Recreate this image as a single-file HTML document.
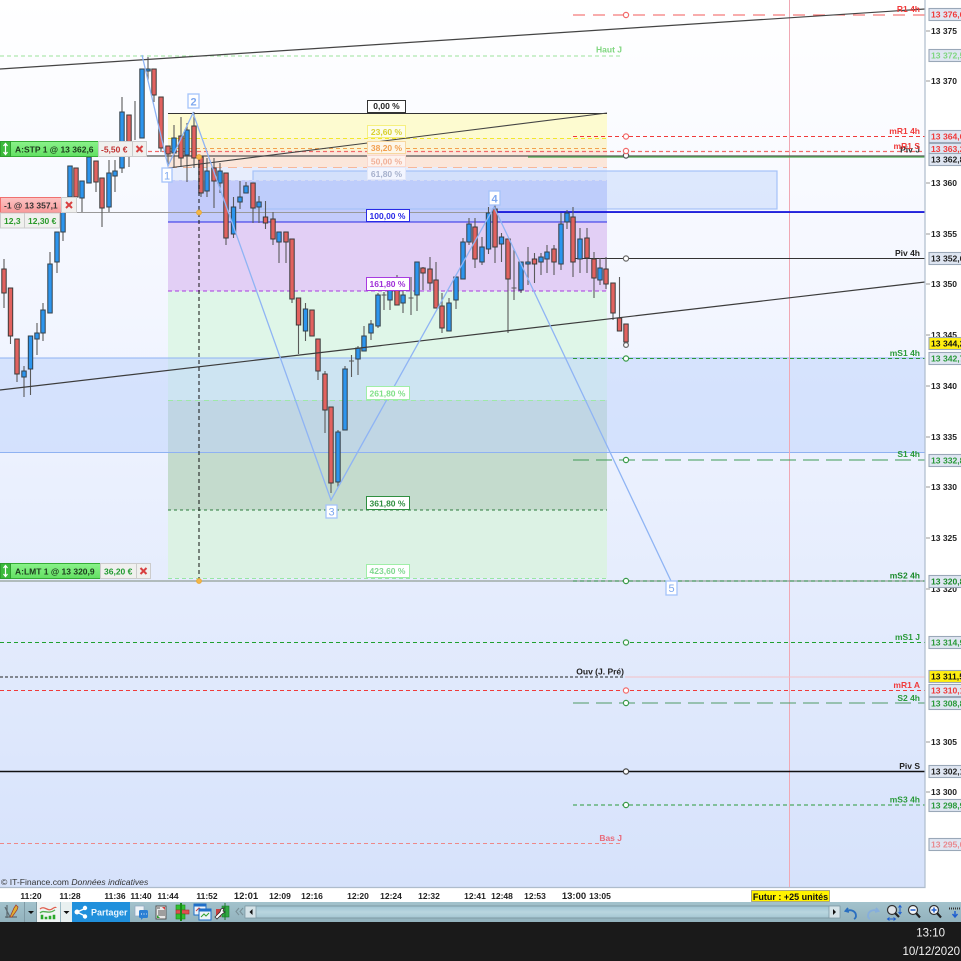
<!DOCTYPE html>
<html><head><meta charset="utf-8"><title>Chart</title>
<style>
html,body{margin:0;padding:0;background:#fff}
body{width:961px;height:961px;overflow:hidden}
svg{display:block;filter:blur(.35px)}
text{font-family:"Liberation Sans",sans-serif;font-size:8.5px;font-weight:bold}
.r{text-anchor:end}
.t{fill:#222}
.p{font-size:8.6px}
.ax{fill:#222}
.fl{text-anchor:middle}
</style></head><body>
<svg width="961" height="961" viewBox="0 0 961 961" xmlns="http://www.w3.org/2000/svg">
<defs>
<linearGradient id="bg" x1="0" y1="0" x2="0" y2="1"><stop offset="0" stop-color="#fff"/><stop offset=".35" stop-color="#f3f6ff"/><stop offset="1" stop-color="#d6e2fb"/></linearGradient>
<linearGradient id="tb" x1="0" y1="0" x2="0" y2="1"><stop offset="0" stop-color="#a3c2cc"/><stop offset="1" stop-color="#93b3be"/></linearGradient>
<linearGradient id="sc" x1="0" y1="0" x2="0" y2="1"><stop offset="0" stop-color="#9fc4d2"/><stop offset=".5" stop-color="#b9d6df"/><stop offset="1" stop-color="#a4c6d2"/></linearGradient>
<linearGradient id="gr" x1="0" y1="0" x2="0" y2="1"><stop offset="0" stop-color="#8af28a"/><stop offset="1" stop-color="#62e062"/></linearGradient>
<linearGradient id="pk" x1="0" y1="0" x2="0" y2="1"><stop offset="0" stop-color="#fcc4c4"/><stop offset="1" stop-color="#f89a9a"/></linearGradient>
</defs>
<rect width="961" height="961" fill="#fff"/>
<rect x="0" y="0" width="925" height="887" fill="url(#bg)"/>

<!-- fib zones -->
<rect x="168" y="113" width="439" height="25" fill="#fdfbd0"/>
<rect x="168" y="138" width="439" height="13" fill="#fbf4d2"/>
<rect x="168" y="151" width="439" height="16" fill="#fbe6da"/>
<rect x="168" y="167" width="439" height="13" fill="#e7edfc"/>
<rect x="168" y="180" width="439" height="42" fill="#c3cbfb"/>
<rect x="168" y="222" width="439" height="69" fill="#e2cff5"/>
<rect x="168" y="291" width="439" height="109" fill="#dff6e8"/>
<rect x="168" y="400" width="439" height="110" fill="#c4dbcd"/>
<rect x="168" y="510" width="439" height="68" fill="#dcf2e4"/>
<!-- blue band -->
<rect x="0" y="358" width="925" height="94" fill="#bcd2fb" fill-opacity=".5"/>
<path d="M0 358H925M0 452.500H925" stroke="#8fb2f2" stroke-width="1"/>
<!-- blue rect -->
<rect x="253" y="171" width="524" height="38" fill="#b8d0fb" fill-opacity=".42" stroke="#a5c2f8" stroke-width="1.2"/>
<path d="M789.500 0V887" stroke="#f0a8b4" stroke-width="1"/>

<!-- horizontal lines below candles -->
<path d="M77 212.500H925" stroke="#999" stroke-width="1"/>
<path d="M168 113.500H607" stroke="#333" stroke-width="1"/>
<path d="M168 138.500H607" stroke="#f2e72a" stroke-width="1" stroke-dasharray="4 3"/>
<path d="M168 148.500H607" stroke="#f1a24e" stroke-width="1" stroke-dasharray="4 3"/>
<path d="M168 167.500H607" stroke="#f6b79b" stroke-width="1" stroke-dasharray="9 6"/>
<path d="M168 180.500H607" stroke="#d5dcf5" stroke-width="1" stroke-dasharray="4 3"/>
<path d="M168 222H607" stroke="#2a2ae6" stroke-width="1"/>
<path d="M168 291H607" stroke="#a83be0" stroke-width="1" stroke-dasharray="4 3"/>
<path d="M168 400.500H607" stroke="#9ee8a8" stroke-width="1" stroke-dasharray="5 4"/>
<path d="M168 510H607" stroke="#2a7a3a" stroke-width="1" stroke-dasharray="3 3"/>
<path d="M168 578.500H607" stroke="#98e6a4" stroke-width="1" stroke-dasharray="4 3"/>
<path d="M0 56H623" stroke="#9be29b" stroke-width="1" stroke-dasharray="4 3"/>
<path d="M573 15H925" stroke="#f25a5a" stroke-width="1" stroke-dasharray="12 8"/>
<path d="M573 136.500H925" stroke="#f03a3a" stroke-width="1" stroke-dasharray="4 3"/>
<path d="M148 151.500H925" stroke="#f26a6a" stroke-width="1.200" stroke-dasharray="4 3"/>
<path d="M147 156H925" stroke="#555" stroke-width="1.300"/>
<path d="M528 157H925" stroke="#50a850" stroke-width="1.200"/>
<path d="M573 258.500H925" stroke="#333" stroke-width="1"/>
<path d="M573 358.500H925" stroke="#2a9a3a" stroke-width="1" stroke-dasharray="4 3"/>
<path d="M573 460H925" stroke="#3f9a55" stroke-width="1" stroke-dasharray="16 7"/>
<path d="M0 581H925" stroke="#7c8a7c" stroke-width="1"/>
<path d="M573 581H925" stroke="#1a7a2a" stroke-width="1" stroke-dasharray="4 3"/>
<path d="M0 642.500H925" stroke="#1fa02f" stroke-width="1" stroke-dasharray="4 3"/>
<path d="M0 677H625" stroke="#222" stroke-width="1" stroke-dasharray="3 2"/>
<path d="M625 677H925" stroke="#f4c0c6" stroke-width="1"/>
<path d="M0 690.500H925" stroke="#f03a3a" stroke-width="1" stroke-dasharray="4 3"/>
<path d="M573 703H925" stroke="#4f9a65" stroke-width="1" stroke-dasharray="16 7"/>
<path d="M0 771.500H925" stroke="#111" stroke-width="1.600"/>
<path d="M573 805H925" stroke="#2a9a3a" stroke-width="1" stroke-dasharray="4 3"/>
<path d="M0 843.500H623" stroke="#e88" stroke-width="1" stroke-dasharray="4 3"/>
<path d="M494 212H925" stroke="#1414e0" stroke-width="1.800"/>

<!-- wicks -->
<path stroke="#5a5a5a" stroke-width="1.100" fill="none" d="M4 259V308M10.500 288V344M17 339V382M24 366V397M30.500 336V395M37 323V355M43 303V341M50 252V313M57 232V273M63 205V241M70 166V197M76 168V197M82 181V212M89 157V183M96 161V192M102 178V227M109 160V212M115 160V192M122 97V173M129 115V167M135 101V140M142 69V138M148 57V80M154 69V102M161 97V152M168 146V165M174 125V167M181 117V167M187 123V182M194 112V168M201 157V197M207 158V197M214 158V208M220 163V193M226 173V245M233.500 197V238M240 181V209M246 182V193M253 183V223M259 196V223M265.500 201V229M273 212V245M279 232V263M286 232V263M292 239V303M298.500 298V354M305.500 303V341M312 310V336M318 339V380M325 371V433M331 407V493M338 430V487M345 366V430M351.500 355V377M349 361H354M343 369H348M358 346V375M364 326V351M371 320V340M378 293V328M384 292V310M381.500 295H386.500M390 285V310M397 275V305M403 287V313M411 277V315M408.500 298H413.500M417 262V311M423 267V290M430 257V290M436 262V308M442 293V333M449 298V331M456 277V309M463 238V279M469 218V245M475 218V268M482 237V265M488.500 207V254M495 205V263M501.500 233V262M508 239V333M514 249V300M511.500 288H516.500M521 262V293M528 247V285M534.500 253V283M541 253V275M547 245V273M554 245V275M561 213V270M567 210V229M573 207V277M580 228V273M587 228V273M594 252V298M600 258V285M606 257V289M613 283V320M619.500 277V331M626 324V346"/>
<!-- red bodies -->
<path fill="#e2625f" stroke="#3a3a3a" stroke-width="1" d="M1.800 269h4.400V293h-4.400zM8.300 288h4.400V336h-4.400zM14.800 339h4.400V374h-4.400zM73.800 168h4.400V197h-4.400zM93.800 161h4.400V182h-4.400zM99.800 178h4.400V208h-4.400zM126.800 115h4.400V150h-4.400zM151.800 69h4.400V95h-4.400zM158.800 97h4.400V148h-4.400zM165.800 146h4.400V154h-4.400zM178.800 136h4.400V158h-4.400zM191.800 126h4.400V158h-4.400zM198.800 157h4.400V193h-4.400zM211.800 168h4.400V181h-4.400zM223.800 173h4.400V238h-4.400zM250.800 183h4.400V208h-4.400zM263.300 217h4.400V223h-4.400zM270.800 219h4.400V239h-4.400zM283.800 232h4.400V242h-4.400zM289.800 239h4.400V299h-4.400zM296.300 298h4.400V325h-4.400zM309.800 310h4.400V336h-4.400zM315.800 339h4.400V371h-4.400zM322.800 374h4.400V410h-4.400zM328.800 407h4.400V483h-4.400zM394.800 287h4.400V305h-4.400zM420.800 268h4.400V273h-4.400zM427.800 269h4.400V283h-4.400zM433.800 280h4.400V308h-4.400zM439.800 306h4.400V328h-4.400zM472.800 227h4.400V259h-4.400zM492.800 209h4.400V247h-4.400zM505.800 239h4.400V279h-4.400zM532.300 259h4.400V264h-4.400zM551.800 249h4.400V262h-4.400zM570.800 217h4.400V262h-4.400zM584.800 238h4.400V258h-4.400zM591.800 259h4.400V278h-4.400zM603.800 269h4.400V284h-4.400zM610.800 283h4.400V313h-4.400zM617.300 318h4.400V331h-4.400zM623.800 324h4.400V342h-4.400z"/>
<!-- blue bodies -->
<path fill="#2c95ee" stroke="#33404a" stroke-width="1" d="M21.800 371h4.400V377h-4.400zM28.300 336h4.400V369h-4.400zM34.800 333h4.400V339h-4.400zM40.800 310h4.400V333h-4.400zM47.800 264h4.400V313h-4.400zM54.800 232h4.400V262h-4.400zM60.800 205h4.400V232h-4.400zM67.800 166h4.400V197h-4.400zM79.800 181h4.400V198h-4.400zM86.800 157h4.400V183h-4.400zM106.800 173h4.400V207h-4.400zM112.800 171h4.400V176h-4.400zM119.800 112h4.400V168h-4.400zM139.800 69h4.400V138h-4.400zM145.800 69h4.400V71h-4.400zM171.800 138h4.400V153h-4.400zM184.800 130h4.400V155h-4.400zM204.800 171h4.400V191h-4.400zM217.800 171h4.400V183h-4.400zM231.300 207h4.400V234h-4.400zM237.800 197h4.400V202h-4.400zM243.800 186h4.400V193h-4.400zM256.800 202h4.400V207h-4.400zM276.800 232h4.400V242h-4.400zM303.300 309h4.400V331h-4.400zM335.800 432h4.400V482h-4.400zM342.800 369h4.400V430h-4.400zM355.800 348h4.400V359h-4.400zM361.800 336h4.400V351h-4.400zM368.800 324h4.400V333h-4.400zM375.800 295h4.400V326h-4.400zM387.800 285h4.400V300h-4.400zM400.800 295h4.400V303h-4.400zM414.800 262h4.400V295h-4.400zM446.800 303h4.400V331h-4.400zM453.800 277h4.400V300h-4.400zM460.800 242h4.400V279h-4.400zM466.800 224h4.400V242h-4.400zM479.800 247h4.400V262h-4.400zM486.300 213h4.400V249h-4.400zM499.300 237h4.400V244h-4.400zM518.800 262h4.400V290h-4.400zM525.800 262h4.400V264h-4.400zM538.800 257h4.400V262h-4.400zM544.800 252h4.400V259h-4.400zM558.800 224h4.400V264h-4.400zM564.800 213h4.400V222h-4.400zM577.800 239h4.400V259h-4.400zM597.800 268h4.400V280h-4.400z"/>

<!-- trend lines & zigzag -->
<path d="M0 69L925 9" stroke="#444" stroke-width="1.200" fill="none"/>
<path d="M168 168L607 113" stroke="#444" stroke-width="1.100" fill="none"/>
<path d="M0 390L925 282" stroke="#3c3c3c" stroke-width="1.200" fill="none"/>
<path d="M142 55L168 166L193 113L331 500L494 207L671 581" stroke="#8fb4f4" stroke-width="1.300" fill="none"/>
<path d="M199 157V581" stroke="#111" stroke-width="1" stroke-dasharray="4 3"/>

<!-- circles -->
<g fill="#fff" stroke-width="1.200">
<circle cx="626" cy="15" r="2.600" stroke="#f26a6a"/>
<circle cx="626" cy="136.500" r="2.600" stroke="#f26a6a"/>
<circle cx="626" cy="155.500" r="2.600" stroke="#555"/>
<circle cx="626" cy="151" r="2.600" stroke="#f26a6a"/>
<circle cx="626" cy="258.500" r="2.600" stroke="#666"/>
<circle cx="626" cy="345" r="2.400" stroke="#666"/>
<circle cx="626" cy="358.500" r="2.600" stroke="#3a9a4a"/>
<circle cx="626" cy="460" r="2.600" stroke="#3a9a4a"/>
<circle cx="626" cy="581" r="2.600" stroke="#3a9a4a"/>
<circle cx="626" cy="642.500" r="2.600" stroke="#3a9a4a"/>
<circle cx="626" cy="690.500" r="2.600" stroke="#f26a6a"/>
<circle cx="626" cy="703" r="2.600" stroke="#3a9a4a"/>
<circle cx="626" cy="771.500" r="2.600" stroke="#444"/>
<circle cx="626" cy="805" r="2.600" stroke="#3a9a4a"/>
</g>
<g fill="#f5b848" stroke="#e8a838"><circle cx="199" cy="157" r="2.400"/><circle cx="199" cy="212.500" r="2.400"/><circle cx="199" cy="581" r="2.400"/></g>

<!-- zigzag number boxes -->
<g fill="#fff" stroke="#a5c4fa" stroke-width="1.300">
<rect x="162" y="168" width="10" height="14"/><rect x="188" y="94" width="11" height="14"/><rect x="489" y="191" width="11" height="14"/><rect x="326" y="505" width="11" height="13"/><rect x="666" y="581" width="11" height="14"/>
</g>
<g fill="#7ea8ef" text-anchor="middle">
<text x="167" y="179.500" style="font-size:11px;font-weight:normal">1</text>
<text x="193.500" y="105.500" style="font-size:11px">2</text>
<text x="494.500" y="202.500" style="font-size:11px">4</text>
<text x="331.500" y="515.500" style="font-size:11px;font-weight:normal">3</text>
<text x="671.500" y="592" style="font-size:11px;font-weight:normal">5</text>
</g>

<!-- fib labels -->
<g fill="#fff" stroke-width="1">
<rect x="367.500" y="100.500" width="38" height="12" stroke="#333"/>
<rect x="367.500" y="125.500" width="38" height="12" stroke="#f6f080" fill="#fdfdea"/>
<rect x="367.500" y="141.500" width="38" height="12" stroke="#f7d7a0" fill="#fdf6e8"/>
<rect x="367.500" y="155.500" width="38" height="11" stroke="#f9d9cf" fill="#fdf2ee"/>
<rect x="367.500" y="167.500" width="38" height="12" stroke="#e4e8f8" fill="#f2f5ff"/>
<rect x="366.500" y="209.500" width="43" height="12" stroke="#2a2ae6"/>
<rect x="366.500" y="277.500" width="43" height="13" stroke="#a83be0"/>
<rect x="366.500" y="386.500" width="43" height="13" stroke="#a0eea8"/>
<rect x="366.500" y="496.500" width="43" height="13" stroke="#2f8f40"/>
<rect x="366.500" y="564.500" width="43" height="13" stroke="#a0eea8"/>
</g>
<text class="fl" x="386.500" y="109" fill="#222">0,00 %</text>
<text class="fl" x="386.500" y="135" fill="#d8d030">23,60 %</text>
<text class="fl" x="386.500" y="151" fill="#f2a050">38,20 %</text>
<text class="fl" x="386.500" y="164.500" fill="#f0b098">50,00 %</text>
<text class="fl" x="386.500" y="177" fill="#a6b0cc">61,80 %</text>
<text class="fl" x="387.500" y="219" fill="#2a2ae6">100,00 %</text>
<text class="fl" x="387.500" y="287" fill="#a030d8">161,80 %</text>
<text class="fl" x="387.500" y="396.500" fill="#80e088">261,80 %</text>
<text class="fl" x="387.500" y="506.500" fill="#2f8f40">361,80 %</text>
<text class="fl" x="387.500" y="574" fill="#80d890">423,60 %</text>

<!-- line labels -->
<text class="r t" x="920" y="12" style="fill:#f03a3a">R1 4h</text>
<text class="r t" x="622" y="52.500" style="fill:#7fd67f">Haut J</text>
<text class="r t" x="920" y="134" style="fill:#f03a3a">mR1 4h</text>
<text class="r t" x="920" y="152.500" style="fill:#333">Piv J</text>
<text class="r t" x="920" y="149" style="fill:#f03a3a">mR1 S</text>
<text class="r t" x="920" y="256" style="fill:#222">Piv 4h</text>
<text class="r t" x="920" y="356" style="fill:#2a9a3a">mS1 4h</text>
<text class="r t" x="920" y="457" style="fill:#2a9a3a">S1 4h</text>
<text class="r t" x="920" y="578.500" style="fill:#1a8a2a">mS2 4h</text>
<text class="r t" x="920" y="640" style="fill:#2a9a3a">mS1 J</text>
<text class="r t" x="624" y="674.500" style="fill:#222">Ouv (J. Pré)</text>
<text class="r t" x="920" y="688" style="fill:#f03a3a">mR1 A</text>
<text class="r t" x="920" y="701" style="fill:#2a9a3a">S2 4h</text>
<text class="r t" x="920" y="769" style="fill:#222">Piv S</text>
<text class="r t" x="920" y="802.500" style="fill:#2a9a3a">mS3 4h</text>
<text class="r t" x="622" y="841" style="fill:#e86a7a">Bas J</text>

<!-- order tags -->
<rect x="0.500" y="141.500" width="98" height="15" fill="url(#gr)" stroke="#35ad35"/>
<rect x="0.500" y="141.500" width="10" height="15" fill="#3cba3c" stroke="#2e9e2e"/>
<path d="M5.500 143.500V154.500M3.500 146l2-2.500 2 2.500M3.500 152l2 2.500 2-2.500" stroke="#fff" stroke-width="1.200" fill="none"/>
<text x="15" y="152.500" fill="#1c3a1c">A:STP  1 @ 13 362,6</text>
<rect x="98.500" y="141.500" width="34" height="15" fill="#f0f0ee" stroke="#ccc"/>
<text x="101" y="152.500" fill="#c03030">-5,50 €</text>
<rect x="132.500" y="141.500" width="14" height="15" fill="#f0f0ee" stroke="#ccc"/>
<path d="M136.500 146l6 6M142.500 146l-6 6" stroke="#d84040" stroke-width="2"/>

<rect x="0.500" y="197.500" width="61" height="15" fill="url(#pk)" stroke="#f07070"/>
<text x="4" y="208.500" fill="#333">-1 @ 13 357,1</text>
<rect x="61.500" y="197.500" width="15" height="15" fill="#f0f0ee" stroke="#ccc"/>
<path d="M66 202l6 6M72 202l-6 6" stroke="#d84040" stroke-width="2"/>
<rect x="0.500" y="213" width="24" height="15" fill="#f0f0ee" stroke="#ccc"/>
<text x="4" y="224" fill="#2a9a2a">12,3</text>
<rect x="24.500" y="213" width="35" height="15" fill="#f0f0ee" stroke="#ccc"/>
<text x="28" y="224" fill="#2a9a2a">12,30 €</text>

<rect x="0.500" y="563.500" width="100" height="15" fill="url(#gr)" stroke="#35ad35"/>
<rect x="0.500" y="563.500" width="10" height="15" fill="#3cba3c" stroke="#2e9e2e"/>
<path d="M5.500 565.500V576.500M3.500 568l2-2.500 2 2.500M3.500 574l2 2.500 2-2.500" stroke="#fff" stroke-width="1.200" fill="none"/>
<text x="15" y="574.500" fill="#1c3a1c">A:LMT  1 @ 13 320,9</text>
<rect x="100.500" y="563.500" width="36" height="15" fill="#f0f0ee" stroke="#ccc"/>
<text x="104" y="574.500" fill="#1f9a2f">36,20 €</text>
<rect x="136.500" y="563.500" width="14" height="15" fill="#f0f0ee" stroke="#ccc"/>
<path d="M140.500 568l6 6M146.500 568l-6 6" stroke="#d84040" stroke-width="2"/>

<!-- chart frame -->
<path d="M925 0V887.500H0" stroke="#aebccc" stroke-width="1.200" fill="none"/>
<text x="1" y="885" style="font-weight:normal;font-size:8.6px" fill="#333">© IT-Finance.com  <tspan font-style="italic">Données indicatives</tspan></text>

<!-- y axis ticks -->
<path stroke="#999" stroke-width="1" d="M926 31h4M926 81h4M926 183h4M926 234h4M926 284h4M926 335h4M926 386h4M926 437h4M926 487h4M926 538h4M926 589h4M926 742h4M926 792h4"/>
<text class="ax" x="931" y="34">13 375</text>
<text class="ax" x="931" y="84">13 370</text>
<text class="ax" x="931" y="186">13 360</text>
<text class="ax" x="931" y="237">13 355</text>
<text class="ax" x="931" y="287">13 350</text>
<text class="ax" x="931" y="338">13 345</text>
<text class="ax" x="931" y="389">13 340</text>
<text class="ax" x="931" y="440">13 335</text>
<text class="ax" x="931" y="490">13 330</text>
<text class="ax" x="931" y="541">13 325</text>
<text class="ax" x="931" y="592">13 320</text>
<text class="ax" x="931" y="745">13 305</text>
<text class="ax" x="931" y="795">13 300</text>

<!-- price tags -->
<g stroke="#9aa8b8" stroke-width="1.100" fill="#dfe6f2">
<rect x="929" y="8.500" width="34" height="12"/>
<rect x="929" y="49.500" width="34" height="12"/>
<rect x="929" y="130.500" width="34" height="12"/>
<rect x="929" y="143.500" width="34" height="10"/>
<rect x="929" y="153.500" width="34" height="12"/>
<rect x="929" y="252.500" width="34" height="12"/>
<rect x="929" y="337.500" width="34" height="12" fill="#ffee10"/>
<rect x="929" y="352.500" width="34" height="12"/>
<rect x="929" y="454.500" width="34" height="12"/>
<rect x="929" y="575.500" width="34" height="12"/>
<rect x="929" y="636.500" width="34" height="12"/>
<rect x="929" y="670.500" width="34" height="12" fill="#ffee10"/>
<rect x="929" y="684.500" width="34" height="12"/>
<rect x="929" y="697.500" width="34" height="12"/>
<rect x="929" y="765.500" width="34" height="12"/>
<rect x="929" y="799.500" width="34" height="12"/>
<rect x="929" y="838.500" width="34" height="12"/>
</g>
<text class="p" x="931" y="17.500" fill="#f03a3a">13 376,6</text>
<text class="p" x="931" y="58.500" fill="#7fd67f">13 372,5</text>
<text class="p" x="931" y="139.500" fill="#f03a3a">13 364,6</text>
<text class="p" x="931" y="151.800" fill="#f03a3a">13 363,2</text>
<text class="p" x="931" y="162.500" fill="#222">13 362,8</text>
<text class="p" x="931" y="261.500" fill="#222">13 352,6</text>
<text class="p" x="931" y="346.500" fill="#111">13 344,2</text>
<text class="p" x="931" y="361.500" fill="#2a9a3a">13 342,7</text>
<text class="p" x="931" y="463.500" fill="#2a9a3a">13 332,8</text>
<text class="p" x="931" y="584.500" fill="#1a8a2a">13 320,8</text>
<text class="p" x="931" y="645.500" fill="#2a9a3a">13 314,9</text>
<text class="p" x="931" y="679.500" fill="#111">13 311,5</text>
<text class="p" x="931" y="693.500" fill="#f03a3a">13 310,1</text>
<text class="p" x="931" y="706.500" fill="#2a9a3a">13 308,8</text>
<text class="p" x="931" y="774.500" fill="#222">13 302,1</text>
<text class="p" x="931" y="808.500" fill="#2a9a3a">13 298,9</text>
<text class="p" x="931" y="847.500" fill="#e88a90">13 295,0</text>

<!-- x axis -->
<g fill="#222" text-anchor="middle">
<text x="31" y="899">11:20</text>
<text x="70" y="899">11:28</text>
<text x="115" y="899">11:36</text>
<text x="141" y="899">11:40</text>
<text x="168" y="899">11:44</text>
<text x="207" y="899">11:52</text>
<text x="246" y="899" style="font-size:9.5px">12:01</text>
<text x="280" y="899">12:09</text>
<text x="312" y="899">12:16</text>
<text x="358" y="899">12:20</text>
<text x="391" y="899">12:24</text>
<text x="429" y="899">12:32</text>
<text x="475" y="899">12:41</text>
<text x="502" y="899">12:48</text>
<text x="535" y="899">12:53</text>
<text x="574" y="899" style="font-size:9.5px">13:00</text>
<text x="600" y="899">13:05</text>
</g>
<rect x="751.500" y="890.500" width="78" height="11" fill="#fff200" stroke="#777" stroke-width=".6"/>
<text x="790.500" y="900" text-anchor="middle" fill="#111" style="font-size:9px">Futur : +25 unités</text>

<!-- toolbar -->
<rect x="0" y="902" width="961" height="20" fill="url(#tb)"/>
<rect x="0" y="922" width="961" height="39" fill="#1a1a1a"/>
<path d="M24.500 902V922M36.500 902V922" stroke="#7f9aa5" stroke-width="1"/>
<path d="M5 907L10 917M5 917h12M7 905v13" stroke="#5c6a70" stroke-width="1.200" fill="none"/>
<path d="M10 917l4-9 2-3 2 2-1 3-5 7z" fill="#e0b030" stroke="#a04030" stroke-width=".8"/>
<path d="M28 911h6l-3 3z" fill="#111"/>
<rect x="37" y="902" width="23" height="20" fill="#f0f4f4"/>
<path d="M40 909c4-4 8 3 12 0s4-1 4-1" stroke="#e06050" stroke-width="1.300" fill="none"/>
<path d="M40 913c4-4 8 2 15-3" stroke="#50b050" stroke-width="1.300" fill="none"/>
<path d="M41 915v4h2v-4zM45 917v2h2v-2zM49 916v3h2v-3zM53 915v4h2v-4z" fill="#2aa82a" stroke="#2aa82a" stroke-width=".6"/>
<rect x="61" y="902" width="11" height="20" fill="#e8f0f0"/>
<path d="M63.500 911h6l-3 3z" fill="#111"/>
<rect x="72" y="902" width="58" height="20" fill="#2090dc"/>
<path d="M85 908.500L77 912L85 916" stroke="#fff" stroke-width="1.300" fill="none"/>
<circle cx="85" cy="908" r="2.200" fill="#fff"/><circle cx="77" cy="912" r="2.500" fill="#fff"/><circle cx="85" cy="916.500" r="2.200" fill="#fff"/>
<text x="91" y="915.500" fill="#eaf6ff" style="font-size:9px">Partager</text>

<!-- toolbar icons -->
<rect x="135" y="906" width="9" height="10" fill="#eef3f7" stroke="#8fa6c0" stroke-width=".7"/>
<rect x="139" y="910" width="9" height="8" rx="1.500" fill="#2a7fd4"/>
<path d="M141 918v2l2-2z" fill="#2a7fd4"/>
<path d="M141 914h1M143.500 914h1M146 914h.7" stroke="#fff" stroke-width="1"/>
<rect x="156" y="906" width="10" height="13" fill="#e8e8e8" stroke="#555" stroke-width="1"/>
<path d="M157 908h3M158 911h7M158 913h7M158 915h7" stroke="#555" stroke-width="1"/>
<path d="M162 907l3 0 0 3z" fill="#d84040"/><path d="M157 918l3 0-3-3z" fill="#30a030"/>
<rect x="176" y="905" width="9" height="5" fill="#30c030" stroke="#1a8a1a" stroke-width=".6"/>
<rect x="176" y="910" width="13" height="4" fill="#e05050" stroke="#a03030" stroke-width=".6"/>
<rect x="176" y="914" width="9" height="5" fill="#30c030" stroke="#1a8a1a" stroke-width=".6"/>
<rect x="180" y="903" width="2" height="18" fill="#1a8a1a"/>
<rect x="194" y="904" width="12" height="11" fill="#eef3f8" stroke="#1f6fc8" stroke-width="1"/>
<rect x="194" y="904" width="12" height="2.500" fill="#1f6fc8"/>
<path d="M196 911l3-3 3 2" stroke="#d04040" stroke-width="1" fill="none"/>
<rect x="199" y="909" width="12" height="11" fill="#eef3f8" stroke="#1f6fc8" stroke-width="1"/>
<rect x="199" y="909" width="12" height="2.500" fill="#1f6fc8"/>
<path d="M201 917l3-3 2 2 3-3" stroke="#30a030" stroke-width="1" fill="none"/>
<rect x="216" y="909" width="5" height="8" fill="#c84040"/>
<rect x="222" y="906" width="7" height="11" fill="#30a840" stroke="#1a7a2a" stroke-width=".6"/>
<path d="M225 903V920" stroke="#1a7a2a"/>
<path d="M215 917l5-5 1-3 3-1-1 3 2 1-3 2-5 5z" fill="#fff" stroke="#333" stroke-width=".8"/>
<path d="M239 908l-3 3.500 3 3.500M243 908l-3 3.500 3 3.500" stroke="#7a9098" stroke-width="1.100" fill="none"/>
<!-- scrollbar -->
<rect x="245" y="906" width="595" height="12" rx="1.500" fill="url(#sc)" stroke="#7f9aa5" stroke-width="1"/>
<rect x="245" y="906" width="11" height="12" fill="#d5e3e8" stroke="#7f9aa5" stroke-width=".8"/>
<path d="M252.500 909v6l-3-3z" fill="#111"/>
<rect x="829" y="906" width="11" height="12" fill="#d5e3e8" stroke="#7f9aa5" stroke-width=".8"/>
<path d="M833 909v6l3-3z" fill="#111"/>
<!-- right icons -->
<path d="M848 908l-2.500 3 3.500 1M846 911c5-2 10 0 10 5 0 1.500-1 2.500-2 3" stroke="#2a6fc0" stroke-width="1.800" fill="none"/>
<path d="M876 908l2.500 3-3.500 1M878 911c-5-2-10 0-10 5 0 1.500 1 2.500 2 3" stroke="#86aedc" stroke-width="1.800" fill="none"/>
<circle cx="892" cy="910" r="4.500" fill="#dfe4e8" stroke="#333" stroke-width="1.200"/>
<path d="M895 913l4 4" stroke="#222" stroke-width="2.200"/>
<path d="M900 906v7M898.500 907.500l1.500-2 1.500 2M898.500 912l1.500 2 1.500-2M888 919h7M889.500 917.500l-2 1.500 2 1.500M893.500 917.500l2 1.500-2 1.500" stroke="#1f5fd0" stroke-width="1" fill="none"/>
<circle cx="913" cy="910" r="4.500" fill="#f4f6f8" stroke="#333" stroke-width="1.200"/>
<path d="M910.500 910h5" stroke="#1f5fd0" stroke-width="1.500"/>
<path d="M916 913l4 4.500" stroke="#222" stroke-width="2.200"/>
<circle cx="934" cy="910" r="4.500" fill="#f4f6f8" stroke="#333" stroke-width="1.200"/>
<path d="M931.500 910h5M934 907.500v5" stroke="#1f5fd0" stroke-width="1.500"/>
<path d="M937 913l4 4.500" stroke="#222" stroke-width="2.200"/>
<path d="M949 908.500h12" stroke="#333" stroke-width="2" stroke-dasharray="1 1"/>
<path d="M955 911v5M952.500 914l2.500 3 2.500-3" stroke="#1f5fd0" stroke-width="1.500" fill="none"/>

<!-- clock -->
<text x="945" y="936.500" text-anchor="end" fill="#f4f4f4" style="font-size:11.500px;font-weight:normal">13:10</text>
<text x="960" y="955" text-anchor="end" fill="#f4f4f4" style="font-size:11.500px;font-weight:normal">10/12/2020</text>
</svg>
</body></html>
